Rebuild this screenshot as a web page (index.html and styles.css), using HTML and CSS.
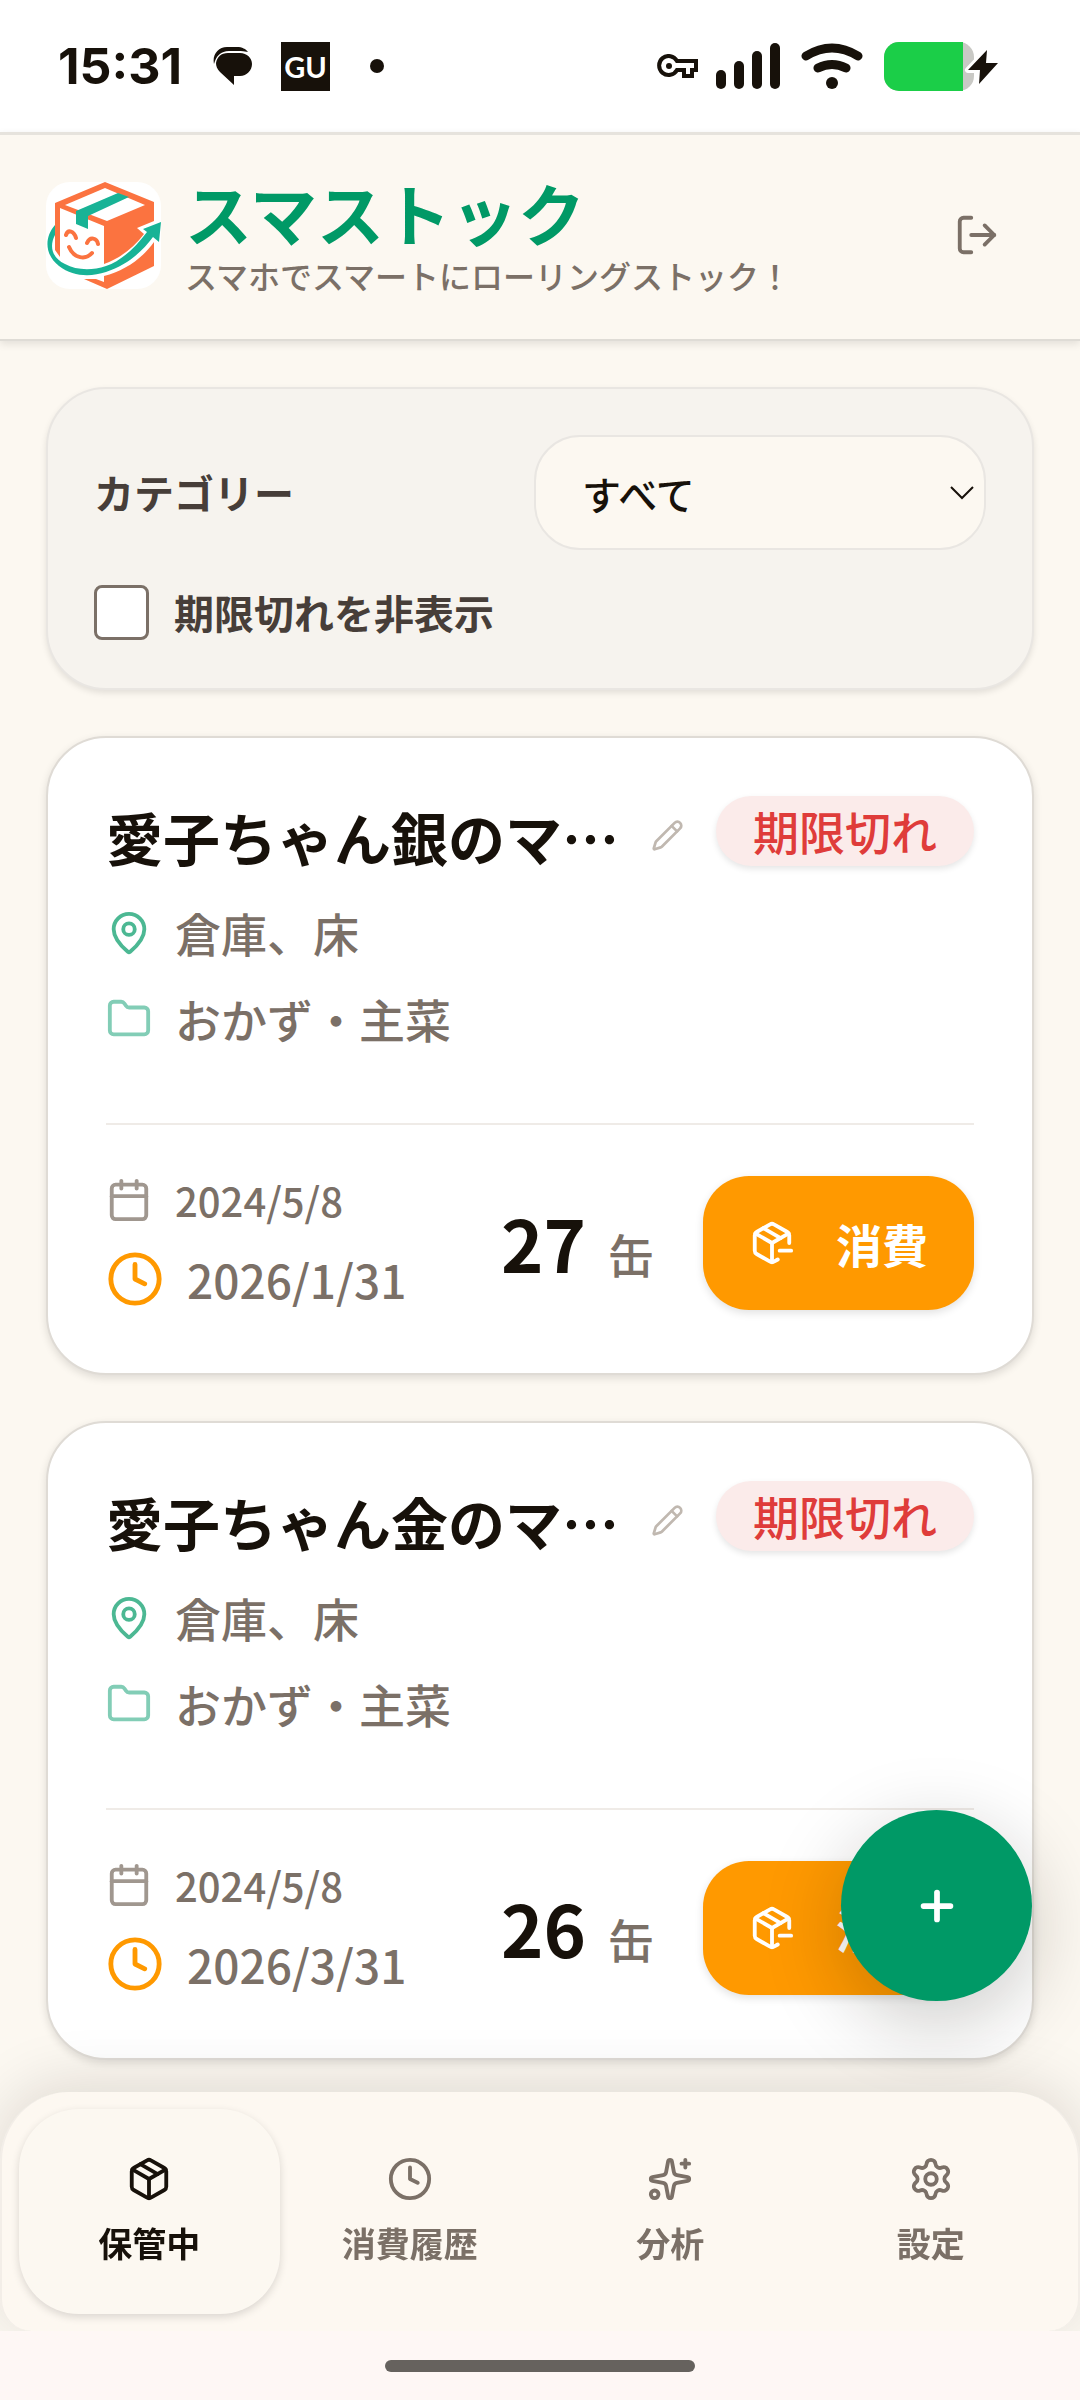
FILE: index.html
```
<!DOCTYPE html>
<html lang="ja">
<head>
    <meta charset="UTF-8">
    <meta name="viewport" content="width=device-width, initial-scale=1.0">
    <title>スマストック</title>
    <link rel="stylesheet" href="styles.css">
</head>
<body>
    <!-- Icon sprite -->
    <svg class="sprite" aria-hidden="true">
        <symbol id="icon-pin" viewBox="0 0 24 24">
            <path d="M20 10c0 4.993-5.539 10.193-7.399 11.799a1 1 0 0 1-1.202 0C9.539 20.193 4 14.993 4 10a8 8 0 0 1 16 0"/>
            <circle cx="12" cy="10" r="3"/>
        </symbol>
        <symbol id="icon-folder" viewBox="0 0 24 24">
            <path d="M20 20a2 2 0 0 0 2-2V8a2 2 0 0 0-2-2h-7.900a2 2 0 0 1-1.690-.900L9.600 3.900A2 2 0 0 0 7.930 3H4a2 2 0 0 0-2 2v13a2 2 0 0 0 2 2Z"/>
        </symbol>
        <symbol id="icon-calendar" viewBox="0 0 24 24">
            <path d="M8 2v4"/>
            <path d="M16 2v4"/>
            <rect width="18" height="18" x="3" y="4" rx="2"/>
            <path d="M3 10h18"/>
        </symbol>
        <symbol id="icon-clock" viewBox="0 0 24 24">
            <circle cx="12" cy="12" r="10"/>
            <path d="M12 6v6l4 2"/>
        </symbol>
        <symbol id="icon-pencil" viewBox="0 0 24 24">
            <path d="M21.174 6.812a1 1 0 0 0-3.986-3.987L3.842 16.174a2 2 0 0 0-.5.83l-1.321 4.352a.5.5 0 0 0 .623.622l4.353-1.320a2 2 0 0 0 .83-.497z"/>
            <path d="m15 5 4 4"/>
        </symbol>
        <symbol id="icon-package" viewBox="0 0 24 24">
            <path d="M11 21.730a2 2 0 0 0 2 0l7-4A2 2 0 0 0 21 16V8a2 2 0 0 0-1-1.730l-7-4a2 2 0 0 0-2 0l-7 4A2 2 0 0 0 3 8v8a2 2 0 0 0 1 1.730z"/>
            <path d="M12 22V12"/>
            <path d="M3.290 7 12 12l8.710-5"/>
            <path d="m7.500 4.270 9 5.150"/>
        </symbol>
        <symbol id="icon-package-minus" viewBox="0 0 24 24">
            <path d="M16 16h6"/>
            <path d="M21 12V8a2 2 0 0 0-1-1.730l-7-4a2 2 0 0 0-2 0l-7 4A2 2 0 0 0 3 8v8a2 2 0 0 0 1 1.730l7 4a2 2 0 0 0 2 0l2-1.140"/>
            <path d="m7.500 4.270 9 5.150"/>
            <path d="M3.290 7 12 12l8.710-5"/>
            <path d="M12 22V12"/>
        </symbol>
    </svg>

    <!-- Status bar -->
    <div class="status-bar">
        <div class="status-left">
            <span class="status-time">15:31</span>
            <svg class="status-chat" viewBox="0 0 40 38">
                <path d="M1 17C-1 8 5 0 14 0h10c5 0 9 2 11 5-4-1-8-1-19-1C8 4 3 9 1 17Z"/>
                <path d="M15 6h12c7 0 12 5 12 11s-5 12-12 12h-6v9L7 25C4 22 3 19 3 16 4 10 8 6 15 6Z"/>
            </svg>
            <span class="status-app">GU</span>
            <span class="status-dot"></span>
        </div>
        <div class="status-right">
            <svg class="status-key" viewBox="0 0 41 24">
                <path d="M20 7h19v9h-4v6h-8v-6h-7a9.500 9.500 0 1 1 0-9Z" fill="none" stroke="#17110a" stroke-width="4"/>
                <circle cx="12" cy="12" r="3"/>
            </svg>
            <svg class="status-signal" viewBox="0 0 64 46">
                <rect x="0" y="27" width="10" height="19" rx="5"/>
                <rect x="18" y="18" width="10" height="28" rx="5"/>
                <rect x="36" y="8" width="10" height="38" rx="5"/>
                <rect x="54" y="0" width="10" height="46" rx="5"/>
            </svg>
            <svg class="status-wifi" viewBox="0 0 62 46">
                <path d="M5 13Q31-3 57 13M17 25Q31 18 45 25" fill="none" stroke="#17110a" stroke-width="9" stroke-linecap="round"/>
                <circle cx="31" cy="40" r="6"/>
            </svg>
            <svg class="status-battery" viewBox="0 0 115 49">
                <rect width="90" height="49" rx="15" fill="#c9c9c5"/>
                <path d="M15 0h64v49H15A15 15 0 0 1 0 34V15A15 15 0 0 1 15 0Z" fill="#1bce48"/>
                <path d="M103 8 84 28h12l-1 14 19-21h-11z" stroke="#fff" stroke-width="6" stroke-linejoin="round"/>
                <path d="M103 8 84 28h12l-1 14 19-21h-12z"/>
            </svg>
        </div>
    </div>

    <header class="app-header">
        <svg class="logo" viewBox="0 0 115 107" role="img" aria-label="スマストック">
            <rect width="115" height="107" rx="24" fill="#fff"/>
            <!-- box -->
            <path d="M59 0 108 20v19L91 46l7 6C88 65 75 76 58 82V44L14 26v49L9 68V21Z" fill="#fb7340"/>
            <path d="m19 23 40-17 40 17-38 16z" fill="#fff"/>
            <path d="M58 94C78 89 96 77 108 60v24L61 107 38 97h12l8 3Z" fill="#fb7340"/>
            <!-- tape -->
            <path d="m30 29 42-18 11 4-41 19v13l-12-5z" fill="#18b396"/>
            <!-- arrow -->
            <path d="M9 43C-3 57 0 74 13 84 27 95 45 95 60 90 81 83 96 70 107 55l6 5 2-20-18 7 4 3C89 66 75 79 60 84 45 89 30 88 19 82 6 76 3 64 9 53Z" fill="#18b396"/>
            <path d="M20 53C22 47 28 49 30 56M41 61C44 54 51 56 52 62M23 65C28 77 40 78 46 71" fill="none" stroke="#fb7340" stroke-width="4" stroke-linecap="round"/>
        </svg>
        <div class="brand">
            <h1>スマストック</h1>
            <p>スマホでスマートにローリングストック！</p>
        </div>
        <button type="button" class="logout" aria-label="ログアウト">
            <svg class="icon" viewBox="0 0 24 24">
                <path d="m16 17 5-5-5-5"/>
                <path d="M21 12H9"/>
                <path d="M9 21H5a2 2 0 0 1-2-2V5a2 2 0 0 1 2-2h4"/>
            </svg>
        </button>
    </header>

    <main>
        <section class="filters">
            <div class="filter-row">
                <label for="category">カテゴリー</label>
                <div class="select-wrap">
                    <select id="category">
                        <option>すべて</option>
                    </select>
                    <svg class="chevron" viewBox="0 0 24 14"><path d="m1 1 11 11L23 1"/></svg>
                </div>
            </div>
            <div class="check-row">
                <input type="checkbox" id="hide-expired">
                <label for="hide-expired">期限切れを非表示</label>
            </div>
        </section>

        <article class="card">
            <div class="card-head">
                <h2>愛子ちゃん銀のマ…</h2>
                <button type="button" class="edit" aria-label="編集">
                    <svg class="icon"><use href="#icon-pencil"/></svg>
                </button>
                <span class="badge">期限切れ</span>
            </div>
            <ul class="meta">
                <li><svg class="icon icon-pin"><use href="#icon-pin"/></svg>倉庫、床</li>
                <li><svg class="icon icon-folder"><use href="#icon-folder"/></svg>おかず・主菜</li>
            </ul>
            <div class="card-foot">
                <div class="dates">
                    <div class="date-bought"><svg class="icon"><use href="#icon-calendar"/></svg>2024/5/8</div>
                    <div class="date-limit"><svg class="icon"><use href="#icon-clock"/></svg>2026/1/31</div>
                </div>
                <div class="quantity"><strong>27</strong><span>缶</span></div>
                <button type="button" class="consume">
                    <svg class="icon"><use href="#icon-package-minus"/></svg>消費
                </button>
            </div>
        </article>

        <article class="card">
            <div class="card-head">
                <h2>愛子ちゃん金のマ…</h2>
                <button type="button" class="edit" aria-label="編集">
                    <svg class="icon"><use href="#icon-pencil"/></svg>
                </button>
                <span class="badge">期限切れ</span>
            </div>
            <ul class="meta">
                <li><svg class="icon icon-pin"><use href="#icon-pin"/></svg>倉庫、床</li>
                <li><svg class="icon icon-folder"><use href="#icon-folder"/></svg>おかず・主菜</li>
            </ul>
            <div class="card-foot">
                <div class="dates">
                    <div class="date-bought"><svg class="icon"><use href="#icon-calendar"/></svg>2024/5/8</div>
                    <div class="date-limit"><svg class="icon"><use href="#icon-clock"/></svg>2026/3/31</div>
                </div>
                <div class="quantity"><strong>26</strong><span>缶</span></div>
                <button type="button" class="consume">
                    <svg class="icon"><use href="#icon-package-minus"/></svg>消費
                </button>
            </div>
        </article>
    </main>

    <button type="button" class="fab" aria-label="追加">
        <svg class="icon" viewBox="0 0 24 24"><path d="M5 12h14"/><path d="M12 5v14"/></svg>
    </button>

    <footer class="bottom">
        <nav class="tabs">
            <a href="#" class="tab active">
                <svg class="icon"><use href="#icon-package"/></svg>
                <span>保管中</span>
            </a>
            <a href="#" class="tab">
                <svg class="icon"><use href="#icon-clock"/></svg>
                <span>消費履歴</span>
            </a>
            <a href="#" class="tab">
                <svg class="icon" viewBox="0 0 24 24">
                    <path d="M11.017 2.814a1 1 0 0 1 1.966 0l1.051 5.558a2 2 0 0 0 1.594 1.594l5.558 1.051a1 1 0 0 1 0 1.966l-5.558 1.051a2 2 0 0 0-1.594 1.594l-1.051 5.558a1 1 0 0 1-1.966 0l-1.051-5.558a2 2 0 0 0-1.594-1.594l-5.558-1.051a1 1 0 0 1 0-1.966l5.558-1.051a2 2 0 0 0 1.594-1.594z"/>
                    <path d="M20 2v4"/>
                    <path d="M22 4h-4"/>
                    <circle cx="4" cy="20" r="2"/>
                </svg>
                <span>分析</span>
            </a>
            <a href="#" class="tab">
                <svg class="icon" viewBox="0 0 24 24">
                    <path d="M9.671 4.136a2.340 2.340 0 0 1 4.659 0 2.340 2.340 0 0 0 3.319 1.915 2.340 2.340 0 0 1 2.330 4.033 2.340 2.340 0 0 0 0 3.831 2.340 2.340 0 0 1-2.330 4.033 2.340 2.340 0 0 0-3.319 1.915 2.340 2.340 0 0 1-4.659 0 2.340 2.340 0 0 0-3.320-1.915 2.340 2.340 0 0 1-2.330-4.033 2.340 2.340 0 0 0 0-3.831A2.340 2.340 0 0 1 6.350 6.051a2.340 2.340 0 0 0 3.319-1.915"/>
                    <circle cx="12" cy="12" r="3"/>
                </svg>
                <span>設定</span>
            </a>
        </nav>
        <div class="home-bar"><span></span></div>
    </footer>
</body>
</html>
```
FILE: styles.css
```
* {
    box-sizing: border-box;
}

body {
    margin: 0;
    min-height: 100vh;
    display: flex;
    flex-direction: column;
    font-family: "Noto Sans CJK JP", "Noto Sans", sans-serif;
    color: #17110a;
    background-color: #fcf8f1;
}

h1, h2, p, ul {
    margin: 0;
    padding: 0;
}

button, select {
    font-family: inherit;
}

.sprite {
    display: none;
}

.icon {
    display: block;
    flex: none;
    width: 46px;
    height: 46px;
    fill: none;
    stroke: currentColor;
    stroke-width: 2;
    stroke-linecap: round;
    stroke-linejoin: round;
}

/* Status bar */
.status-bar {
    display: flex;
    justify-content: space-between;
    align-items: center;
    height: 132px;
    padding: 0 81px 0 58px;
    background-color: #fff;
}

.status-left, .status-right {
    display: flex;
    align-items: center;
}

.status-bar svg {
    display: block;
    fill: #17110a;
}

.status-time {
    width: 155px;
    font: 700 50px/66px Inter, sans-serif;
}

.status-chat {
    width: 40px;
    height: 38px;
}

.status-app {
    width: 49px;
    height: 49px;
    margin: 0 40px 0 28px;
    background-color: #17110a;
    color: #fff;
    font: 700 29px/49px Lato, sans-serif;
    text-align: center;
}

.status-dot {
    width: 14px;
    height: 14px;
    border-radius: 50%;
    background-color: #17110a;
}

.status-key {
    width: 41px;
    height: 24px;
    margin-right: 18px;
}

.status-signal {
    width: 64px;
    height: 46px;
    margin-right: 21px;
}

.status-wifi {
    width: 62px;
    height: 46px;
    margin-right: 21px;
}

.status-battery {
    width: 115px;
    height: 49px;
}

/* Header */
.app-header {
    display: flex;
    align-items: center;
    height: 209px;
    padding: 0 57px 4px 46px;
    background-color: #fcf8f1;
    border-top: 3px solid #e6e3dd;
    border-bottom: 2px solid #dfdcd6;
    box-shadow: 0 3px 8px rgba(0, 0, 0, 0.1);
}

.logo {
    flex: none;
    width: 115px;
    height: 107px;
}

.brand {
    flex: 1;
    margin-left: 24px;
}

.brand h1 {
    font-size: 67px;
    line-height: 80px;
    font-weight: 700;
    color: #009966;
}

.brand p {
    font-size: 32px;
    line-height: 46px;
    font-weight: 500;
    color: #7b7067;
}

.logout {
    padding: 23px;
    border: none;
    background: none;
    color: #7b7067;
}

/* Content */
main {
    display: flex;
    flex-direction: column;
    gap: 46px;
    padding: 46px 46px 32px;
}

.filters {
    display: flex;
    flex-direction: column;
    gap: 33px;
    padding: 46px;
    border: 2px solid #e9e6e2;
    border-radius: 60px;
    background-color: #f6f3ee;
    box-shadow: 0 3px 6px rgba(0, 0, 0, 0.1);
    font-size: 40px;
    line-height: 59px;
    font-weight: 700;
    color: #473e39;
}

.filter-row {
    display: flex;
    justify-content: space-between;
    align-items: center;
}

.select-wrap {
    position: relative;
    width: 452px;
}

.select-wrap select {
    display: block;
    appearance: none;
    width: 100%;
    height: 115px;
    padding: 0 46px;
    border: 2px solid #e9e6e2;
    border-radius: 46px;
    background-color: #fcf8f1;
    color: #17110a;
    font-size: 39px;
    font-weight: 500;
}

.chevron {
    position: absolute;
    right: 12px;
    top: 51px;
    width: 24px;
    height: 14px;
    fill: none;
    stroke: #17110a;
    stroke-width: 2;
    pointer-events: none;
}

.check-row {
    display: flex;
    align-items: center;
    gap: 25px;
}

.check-row input {
    appearance: none;
    width: 55px;
    height: 55px;
    margin: 0;
    border: 3px solid #7b7067;
    border-radius: 8px;
    background-color: #fff;
}

/* Stock card */
.card {
    padding: 58px;
    border: 2px solid #dfdbd5;
    border-radius: 60px;
    background-color: #fff;
    box-shadow: 0 3px 8px rgba(0, 0, 0, 0.12);
}

.card-head {
    display: flex;
    align-items: flex-start;
}

.card-head h2 {
    font-size: 57px;
    line-height: 80px;
    font-weight: 700;
    white-space: nowrap;
}

.edit {
    margin-left: auto;
    margin-right: 32px;
    padding: 23px 0;
    border: none;
    background: none;
    color: #c0b8b0;
}

.edit .icon {
    width: 33px;
    height: 33px;
}

.badge {
    padding: 0 37px 2px;
    border-radius: 35px;
    background-color: #fbebea;
    box-shadow: 0 3px 6px rgba(0, 0, 0, 0.1);
    color: #df3c3a;
    font-size: 46px;
    line-height: 68px;
    font-weight: 500;
    white-space: nowrap;
}

.meta {
    display: flex;
    flex-direction: column;
    gap: 17px;
    margin-top: 22px;
    list-style: none;
}

.meta li {
    display: flex;
    align-items: center;
    gap: 23px;
    font-size: 46px;
    line-height: 69px;
    font-weight: 500;
    color: #7b7067;
}

.icon-pin {
    color: #4cb893;
}

.icon-folder {
    color: #82cdb6;
}

.card-foot {
    display: flex;
    align-items: center;
    margin-top: 70px;
    padding-top: 46px;
    border-top: 2px solid #efebe7;
}

.dates {
    display: flex;
    flex-direction: column;
    gap: 14px;
    color: #7b7067;
}

.date-bought, .date-limit {
    display: flex;
    align-items: center;
    gap: 23px;
    font-weight: 500;
}

.date-bought {
    font-size: 40px;
    line-height: 58px;
}

.date-bought .icon {
    color: #a0978f;
}

.date-limit {
    font-size: 46px;
    line-height: 72px;
}

.date-limit .icon {
    width: 58px;
    height: 58px;
    color: #ff9900;
}

.quantity {
    display: flex;
    align-items: baseline;
    gap: 22px;
    margin-left: auto;
    margin-right: 49px;
    padding-top: 8px;
    line-height: 100px;
}

.quantity strong {
    font-size: 72px;
    font-weight: 700;
}

.quantity span {
    font-size: 46px;
    font-weight: 500;
    color: #7b7067;
}

.consume {
    display: flex;
    align-items: center;
    gap: 41px;
    height: 134px;
    padding: 0 46px;
    border: none;
    border-radius: 46px;
    background-color: #ff9900;
    box-shadow: 0 3px 8px rgba(0, 0, 0, 0.12);
    color: #fff;
    font-size: 46px;
    font-weight: 700;
    white-space: nowrap;
}

/* Floating add button */
.fab {
    position: fixed;
    right: 48px;
    bottom: 399px;
    z-index: 2;
    display: flex;
    justify-content: center;
    align-items: center;
    width: 191px;
    height: 191px;
    border: none;
    border-radius: 50%;
    background-color: #009966;
    box-shadow: 0 22px 80px rgba(23, 17, 10, 0.22);
    color: #fff;
}

.fab .icon {
    stroke-width: 3;
}

/* Bottom navigation */
.bottom {
    position: sticky;
    bottom: 0;
    z-index: 3;
    margin-top: auto;
}

.tabs {
    display: grid;
    grid-template-columns: repeat(4, 1fr);
    padding: 17px;
    border: 2px solid #f3eee8;
    border-top: none;
    border-bottom: none;
    border-radius: 69px 69px 32px 32px;
    background-color: #fdf8f1;
    box-shadow: 0 -8px 60px rgba(23, 17, 10, 0.13);
}

.tab {
    display: flex;
    flex-direction: column;
    justify-content: center;
    align-items: center;
    gap: 16px;
    height: 205px;
    border-radius: 60px;
    color: #7b7067;
    font-size: 34px;
    line-height: 50px;
    font-weight: 700;
    text-decoration: none;
}

.tab.active {
    background-color: #fcf8f1;
    box-shadow: 0 3px 8px rgba(0, 0, 0, 0.14);
    color: #17110a;
}

.home-bar {
    position: relative;
    display: flex;
    justify-content: center;
    align-items: center;
    height: 69px;
    background-color: #fef7f5;
}

.home-bar span {
    width: 310px;
    height: 12px;
    border-radius: 6px;
    background-color: #66625e;
}
```
